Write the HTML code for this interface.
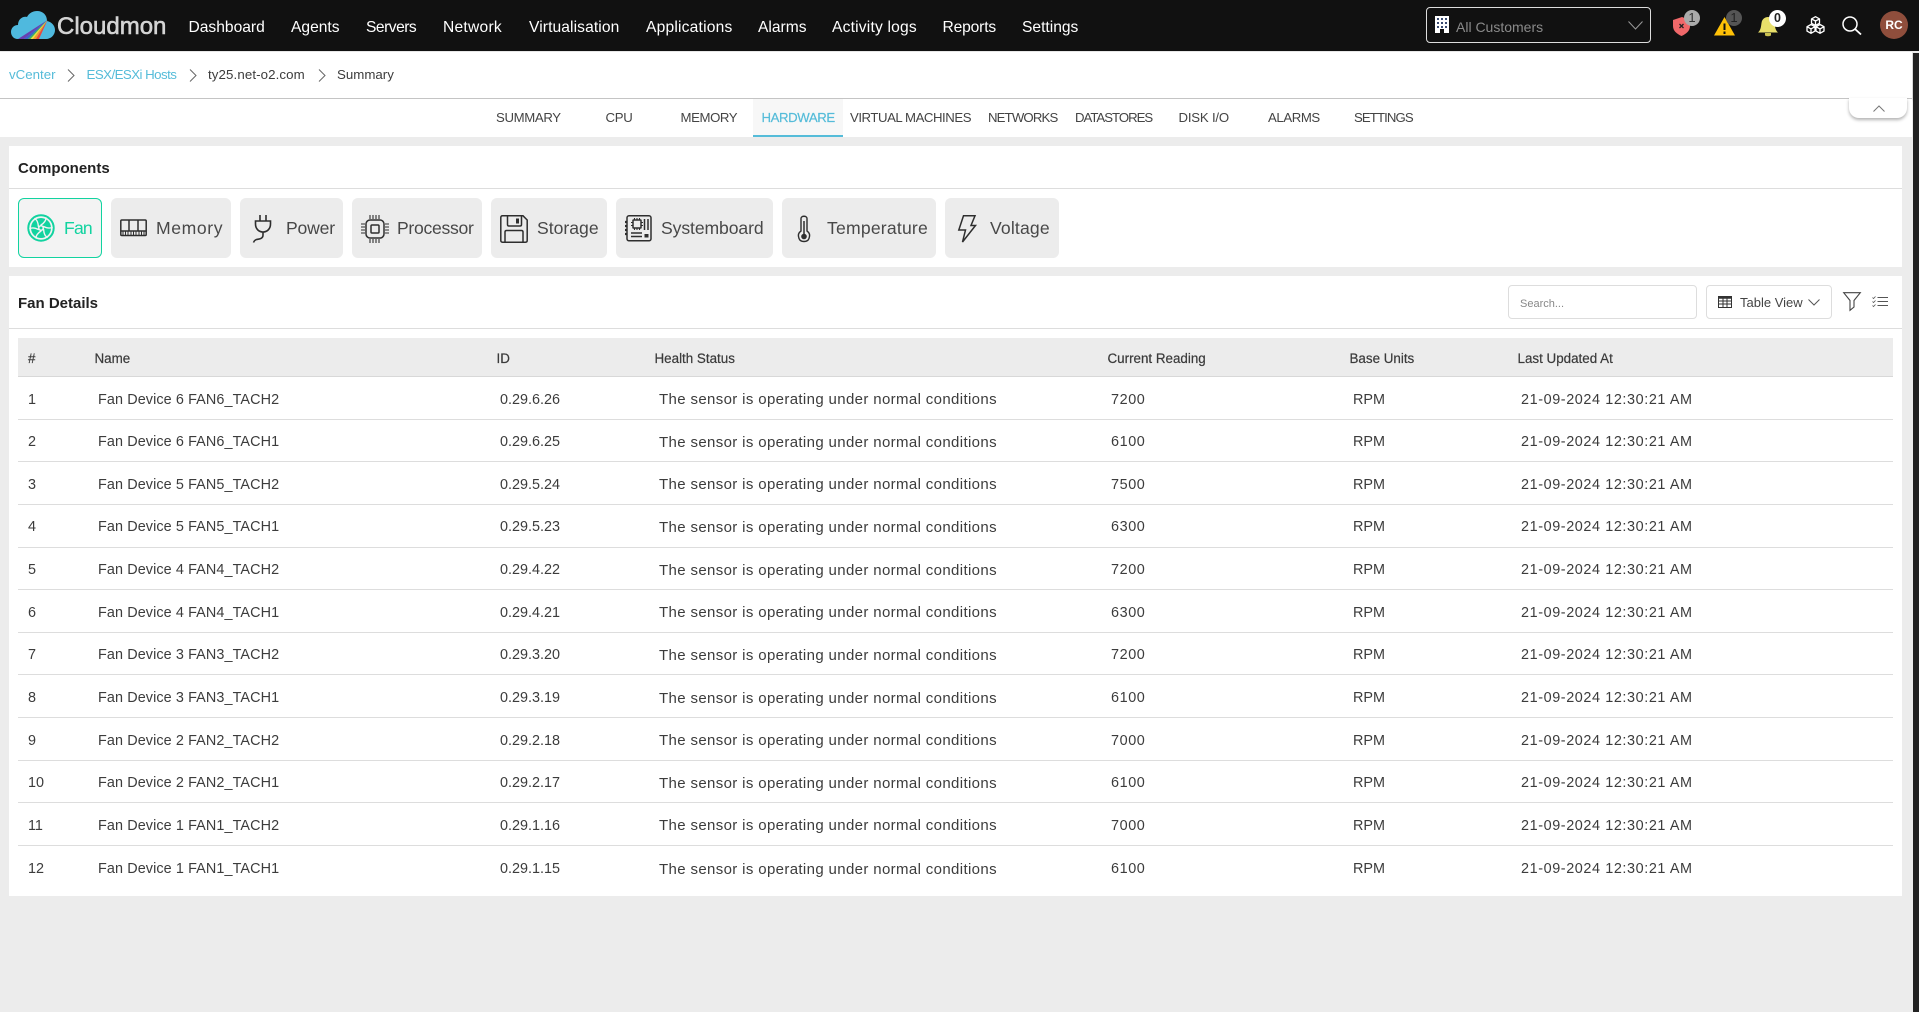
<!DOCTYPE html>
<html lang="en"><head><meta charset="utf-8"><title>Cloudmon</title>
<style>
*{box-sizing:border-box}
html,body{margin:0;padding:0;width:1919px;height:1012px;overflow:hidden;background:#ececec;font-family:"Liberation Sans",sans-serif;color:#3c3c3c}
.a{position:absolute;white-space:nowrap}
#top{position:absolute;left:0;top:0;width:1919px;height:51px;background:#111}
#top .n{position:absolute;top:0;line-height:55px;font-size:15.6px;color:#fff;white-space:nowrap}
#crumb{position:absolute;left:0;top:52px;width:1912px;height:47px;background:#fff;border-bottom:1px solid #c4c4c4;box-shadow:0 1px 2px rgba(0,0,0,.25)}
.c{position:absolute;top:75px;line-height:0;font-size:13.3px;white-space:nowrap;color:#3c3c3c}
#tabs{position:absolute;left:0;top:99px;width:1912px;height:38px;background:#fff}
.t{position:absolute;top:118px;line-height:0;font-size:13.2px;color:#444;white-space:nowrap}
.p{position:absolute;left:9px;width:1893px;background:#fff}
.h{position:absolute;left:18px;font-weight:700;font-size:15px;line-height:0;color:#222;white-space:nowrap}
.l{position:absolute;left:9px;width:1893px;height:1px;background:#ddd}
.b{position:absolute;top:198px;height:60px;background:#ececec;border-radius:6px}
.bt{position:absolute;top:228px;line-height:0;font-size:17.6px;color:#484848;white-space:nowrap}
svg{position:absolute;overflow:visible}
#tbl{position:absolute;left:18px;top:338px;width:1875px}
.th,.r{display:flex;align-items:center;font-size:14.4px;width:1875px}
.th{height:39px;padding-top:2.5px;background:#ececec;border-bottom:1px solid #d8d8d8;font-size:13.4px;color:#3a3a3a;-webkit-text-stroke:.2px #3a3a3a}
.r{height:42.65px;border-bottom:1px solid #ddd;padding-top:3.5px}
.r:last-child{border-bottom:0}
.r span,.th span{display:block;white-space:nowrap}
.c1{width:77px;padding-left:10px}
.c2{width:402px}.c3{width:158px}.c4{width:453px}.c5{width:242px}.c6{width:168px}.c7{width:375px}
.r .c2,.r .c3,.r .c5,.r .c6,.r .c7{padding-left:3px}
.r .c4{padding-left:4px}
.r .c2{letter-spacing:.1px}.r .c4{font-size:15px;letter-spacing:.36px}.r .c5{letter-spacing:.6px}.r .c7{letter-spacing:.6px}
</style></head><body>

<div id="top">
<svg style="left:0;top:0" width="60" height="51" viewBox="0 0 60 51">
<path d="M18 39C13 39 11 35 11 32C11 28 14 25 18 25C18 19 23 16 27 17C29 13 33 11 37 11C43 11 47 15 47 21C52 22 55 26 55 30C55 35 51 39 46 39Z" fill="#4fb9de"/>
<path d="M47.500 20L18 39H24Z" fill="#6a3fb0"/><path d="M47.500 20L24 39H28Z" fill="#3d62c8"/><path d="M47.500 20L28 39H30.500Z" fill="#3fb35a"/><path d="M47.500 20L30.500 39H33Z" fill="#f4e23c"/><path d="M47.500 20L33 39H36Z" fill="#f49a2c"/><path d="M47.500 20L36 39H39Z" fill="#e9483c"/>
</svg>
<div class="a" style="left:57px;top:0;line-height:54px;font-size:24px;color:#d4d4d4;-webkit-text-stroke:.6px #d4d4d4">Cloudmon</div>
<div class="n" style="left:188.500px">Dashboard</div>
<div class="n" style="left:291px">Agents</div>
<div class="n" style="left:366px;letter-spacing:-.5px">Servers</div>
<div class="n" style="left:443px;letter-spacing:.25px">Network</div>
<div class="n" style="left:529px;letter-spacing:.1px">Virtualisation</div>
<div class="n" style="left:646px;letter-spacing:.2px">Applications</div>
<div class="n" style="left:758px">Alarms</div>
<div class="n" style="left:832px;letter-spacing:.2px">Activity logs</div>
<div class="n" style="left:942.500px;letter-spacing:-.15px">Reports</div>
<div class="n" style="left:1022px">Settings</div>

<div class="a" style="left:1426px;top:7px;width:225px;height:36px;border:1px solid #ddd;border-radius:4px"></div>
<svg style="left:1435px;top:16px" width="14" height="17" viewBox="0 0 14 17"><rect x="0" y="0" width="14" height="17" fill="#fff"/><g fill="#3a4a70"><rect x="2" y="2" width="2" height="2"/><rect x="6" y="2" width="2" height="2"/><rect x="10" y="2" width="2" height="2"/><rect x="2" y="6" width="2" height="2"/><rect x="6" y="6" width="2" height="2"/><rect x="10" y="6" width="2" height="2"/><rect x="2" y="10" width="2" height="2"/><rect x="6" y="10" width="2" height="2"/><rect x="10" y="10" width="2" height="2"/></g><rect x="5" y="13" width="4" height="4" fill="#111"/></svg>
<div class="a" style="left:1456px;top:0;line-height:54px;font-size:14px;color:#8a8a8a">All Customers</div>
<svg style="left:1628px;top:21px" width="15" height="9" viewBox="0 0 15 9"><path d="M.5.500L7.500 8L14.500.500" fill="none" stroke="#999" stroke-width="1"/></svg>

<svg style="left:1673px;top:17px" width="18" height="19" viewBox="0 0 18 19"><path d="M0 3L9 0L17 3V9C17 14 13 17 8.500 19C4 17 0 14 0 9Z" fill="#f0686a"/><path d="M6 6L10 10M10 6L6 10" transform="translate(.5 1)" stroke="#222" stroke-width="1.300"/></svg>
<div class="a" style="left:1684px;top:10px;width:16px;height:16px;border-radius:50%;background:#aaa;color:#333;font-size:13px;line-height:16px;text-align:center">1</div>
<svg style="left:1714px;top:17px" width="21" height="19" viewBox="0 0 21 19"><path d="M10.500 0L21 18.500H0Z" fill="#ffc107"/><path d="M10.500 6.500V13M10.500 14.500V17" stroke="#111" stroke-width="2"/></svg>
<div class="a" style="left:1726px;top:10px;width:16px;height:16px;border-radius:50%;background:#555;color:#222;font-size:13px;line-height:16px;text-align:center">1</div>
<svg style="left:1758px;top:16px" width="20" height="21" viewBox="0 0 20 21"><path d="M0 16.500C3 14 3 10 3.500 7C4 3 7 1 10 1C13 1 16 3 16.500 7C17 10 17 14 20 16.500Z" fill="#e8df6a"/><path d="M7 17H13V19.500Q10 21 7 19.500Z" fill="#c9c050"/></svg>
<div class="a" style="left:1769px;top:9.500px;width:17px;height:17px;border-radius:50%;background:#fff;color:#222;font-size:12.500px;font-weight:700;line-height:17px;text-align:center">0</div>
<svg style="left:1806px;top:16px" width="19" height="18" viewBox="0 0 19 18" fill="none" stroke="#fff" stroke-width="1.300" stroke-linejoin="round"><path d="M9.500.700L13.500 2.900V7.300L9.500 9.500L5.500 7.300V2.900ZM5.500 2.900L9.500 5L13.500 2.900M9.500 5V9.500"/><path d="M5 8.500L9 10.700V15.100L5 17.300L1 15.100V10.700ZM1 10.700L5 12.900L9 10.700M5 12.900V17.300"/><path d="M14 8.500L18 10.700V15.100L14 17.300L10 15.100V10.700ZM10 10.700L14 12.900L18 10.700M14 12.900V17.300"/></svg>
<svg style="left:1842px;top:16px" width="20" height="19" viewBox="0 0 20 19" fill="none" stroke="#fff" stroke-width="1.500"><circle cx="8" cy="8" r="7"/><path d="M13 13L19 18.500" stroke-width="1.800"/></svg>
<div class="a" style="left:1880px;top:11px;width:28px;height:28px;border-radius:50%;background:#8f4e3c;color:#fff;font-size:12px;font-weight:700;line-height:28px;text-align:center">RC</div>
</div>

<div class="a" style="left:1913px;top:53px;width:6px;height:959px;background:#222"></div>

<div id="crumb"></div>
<div class="c" style="left:9px;color:#55bcd9">vCenter</div>
<svg style="left:67px;top:69px" width="8" height="13" viewBox="0 0 8 13"><path d="M1 .500L7 6.500L1 12.500" fill="none" stroke="#666"/></svg>
<div class="c" style="left:86.500px;color:#55bcd9;letter-spacing:-.55px">ESX/ESXi Hosts</div>
<svg style="left:189px;top:69px" width="8" height="13" viewBox="0 0 8 13"><path d="M1 .500L7 6.500L1 12.500" fill="none" stroke="#666"/></svg>
<div class="c" style="left:208px;letter-spacing:.1px">ty25.net-o2.com</div>
<svg style="left:318px;top:69px" width="8" height="13" viewBox="0 0 8 13"><path d="M1 .500L7 6.500L1 12.500" fill="none" stroke="#666"/></svg>
<div class="c" style="left:337px">Summary</div>

<div id="tabs"></div>
<div class="a" style="left:753px;top:99px;width:90px;height:38px;background:#f7f7f7;border-bottom:2px solid #55bcd9"></div>
<div class="t" style="left:496px;letter-spacing:-.35px">SUMMARY</div>
<div class="t" style="left:605.500px;letter-spacing:-.3px">CPU</div>
<div class="t" style="left:680.500px;letter-spacing:-.4px">MEMORY</div>
<div class="t" style="left:761.500px;color:#55bcd9;-webkit-text-stroke:.2px #55bcd9;letter-spacing:-.4px">HARDWARE</div>
<div class="t" style="left:850px;letter-spacing:-.45px">VIRTUAL MACHINES</div>
<div class="t" style="left:988px;letter-spacing:-.85px">NETWORKS</div>
<div class="t" style="left:1075px;letter-spacing:-1px">DATASTORES</div>
<div class="t" style="left:1178.500px;letter-spacing:-.2px">DISK I/O</div>
<div class="t" style="left:1268px;letter-spacing:-.4px">ALARMS</div>
<div class="t" style="left:1354px;letter-spacing:-.9px">SETTINGS</div>

<div class="a" style="left:1849px;top:98px;width:58px;height:20px;background:#fff;border-radius:0 0 10px 10px;box-shadow:0 2px 3px rgba(0,0,0,.3)"></div>
<svg style="left:1873px;top:105px" width="12" height="7" viewBox="0 0 12 7"><path d="M.5 6.500L6 1L11.500 6.500" fill="none" stroke="#777"/></svg>

<div class="p" style="top:146px;height:121px"></div>
<div class="l" style="top:188px"></div>
<div class="h" style="top:169px">Components</div>

<div class="b" style="left:18px;width:84px;background:#f3f3f3;border:1px solid #12d3a0"></div>
<svg style="left:27px;top:214px" width="28" height="28" viewBox="-14 -14 28 28">
<circle r="12.700" fill="none" stroke="#12d3a0" stroke-width="2"/>
<circle r="10" fill="#12d3a0"/>
<g fill="none" stroke="#f3f3f3" stroke-width="1.400" stroke-linecap="round">
<path d="M0-3C3-5 5-7 5-10"/><path d="M0-3C3-5 5-7 5-10" transform="rotate(60)"/><path d="M0-3C3-5 5-7 5-10" transform="rotate(120)"/><path d="M0-3C3-5 5-7 5-10" transform="rotate(180)"/><path d="M0-3C3-5 5-7 5-10" transform="rotate(240)"/><path d="M0-3C3-5 5-7 5-10" transform="rotate(300)"/>
</g>
<circle r="3" fill="#f3f3f3"/><circle r="1.500" fill="#12d3a0"/></svg>
<div class="bt" style="left:64px;color:#12d3a0;letter-spacing:-.8px">Fan</div>

<div class="b" style="left:111px;width:120px"></div>
<svg style="left:120px;top:219px" width="27" height="19" viewBox="0 0 27 19" fill="none" stroke="#2e2e2e" stroke-width="1.500"><rect x=".8" y="1" width="25.400" height="15.500" rx="1"/><path d="M9 1V12M18 1V12M1 12H26"/><path d="M3 12V16M5.500 12V16M8 12V16M11 12V16M13.500 12V16M16 12V16M19 12V16M21.500 12V16M24 12V16" stroke-width="1"/></svg>
<div class="bt" style="left:156px;letter-spacing:.6px">Memory</div>

<div class="b" style="left:240px;width:103px"></div>
<svg style="left:253px;top:214px" width="19" height="29" viewBox="0 0 19 29" fill="none" stroke="#2e2e2e" stroke-width="1.600"><path d="M7 1V7M13 1V7M2.500 7H17.500V10C17.500 15 14 18 10 18C6 18 2.500 15 2.500 10ZM10 18V21C10 25 6 25 3.500 25.500C2 26 1 27 .5 28.500"/></svg>
<div class="bt" style="left:286px;letter-spacing:-.2px">Power</div>

<div class="b" style="left:352px;width:130px"></div>
<svg style="left:361px;top:215px" width="28" height="28" viewBox="0 0 28 28" fill="none" stroke="#2e2e2e" stroke-width="1.500"><rect x="5" y="5" width="18" height="18" rx="4"/><rect x="10" y="10" width="8" height="8" rx="1"/><path d="M9 0V4M12 0V4M15 0V4M18 0V4M9 24V28M12 24V28M15 24V28M18 24V28M0 9H4M0 12H4M0 15H4M0 18H4M24 9H28M24 12H28M24 15H28M24 18H28" stroke-width="1.100"/></svg>
<div class="bt" style="left:397px;letter-spacing:-.3px">Processor</div>

<div class="b" style="left:491px;width:116px"></div>
<svg style="left:500px;top:215px" width="28" height="28" viewBox="0 0 28 28" fill="none" stroke="#2e2e2e" stroke-width="1.500"><path d="M2.500.8H23L27.200 5V25.500Q27.200 27.200 25.500 27.200H2.500Q.8 27.200.8 25.500V2.500Q.8.8 2.500.8Z"/><path d="M7.500 1V9.500Q7.500 11 9 11H20Q21.500 11 21.500 9.500V1M5 27V17Q5 15.500 6.500 15.500H21.500Q23 15.500 23 17V27"/><rect x="16" y="3.500" width="3" height="5" fill="#2e2e2e" stroke="none"/></svg>
<div class="bt" style="left:537px">Storage</div>

<div class="b" style="left:616px;width:157px"></div>
<svg style="left:625px;top:215px" width="27" height="27" viewBox="0 0 27 27" fill="none" stroke="#2e2e2e" stroke-width="1.500"><rect x="2" y=".8" width="24" height="25" rx="2"/><rect x="8" y="5" width="8" height="8" rx=".5"/><path d="M9.500 3V5M12 3V5M14.500 3V5M9.500 13V15M12 13V15M14.500 13V15M6 7.500H8M6 10.500H8M16 7.500H18M16 10.500H18" stroke-width="1.100"/><path d="M19.500 4V15M23 4V15M6 18H17M6 21.500H17" stroke-width="1.500"/><rect x="19.500" y="19" width="4" height="3.500" fill="#2e2e2e" stroke="none"/><path d="M0 7H2M0 11H2M0 15H2M0 19H2" stroke-width="2.200"/></svg>
<div class="bt" style="left:661px;letter-spacing:-.1px">Systemboard</div>

<div class="b" style="left:782px;width:154px"></div>
<svg style="left:798px;top:215px" width="12" height="28" viewBox="0 0 12 28" fill="none" stroke="#2e2e2e" stroke-width="1.400"><path d="M3 16V3.500C3 .5 9 .5 9 3.500V16C12 18 12 21 11 23.500C9.500 27.500 2.500 27.500 1 23.500C0 21 0 18 3 16Z"/><path d="M6 6V20" stroke-width="1.500"/><circle cx="6" cy="21.500" r="2.800" fill="#2e2e2e" stroke="none"/></svg>
<div class="bt" style="left:827px;letter-spacing:.2px">Temperature</div>

<div class="b" style="left:945px;width:114px"></div>
<svg style="left:958px;top:215px" width="18" height="28" viewBox="0 0 18 28" fill="none" stroke="#2e2e2e" stroke-width="1.500" stroke-linejoin="miter"><path d="M5.500.8H17L13 10.500H17.500L4.500 27L7.500 15H.8Z"/></svg>
<div class="bt" style="left:990px;letter-spacing:.15px">Voltage</div>

<div class="p" style="top:276px;height:620px"></div>
<div class="l" style="top:328px"></div>
<div class="h" style="top:304px">Fan Details</div>

<div class="a" style="left:1508px;top:285px;width:189px;height:34px;border:1px solid #ddd;border-radius:4px;background:#fff"></div>
<div class="a" style="left:1520px;top:0;line-height:609px;font-size:11px;color:#888">Search...</div>
<div class="a" style="left:1706px;top:285px;width:126px;height:34px;border:1px solid #ddd;border-radius:4px;background:#fff"></div>
<svg style="left:1718px;top:296px" width="14" height="12" viewBox="0 0 14 12" fill="none" stroke="#333"><rect x=".5" y=".5" width="13" height="11"/><path d="M0 1.500H14" stroke-width="2.500"/><path d="M.5 5H13.500M.5 8H13.500M5 2V11.500M9 2V11.500"/></svg>
<div class="a" style="left:1740px;top:0;line-height:605px;font-size:13px;color:#444">Table View</div>
<svg style="left:1808px;top:299px" width="12" height="7" viewBox="0 0 12 7"><path d="M.5.500L6 6L11.500.500" fill="none" stroke="#555"/></svg>
<svg style="left:1843px;top:292px" width="18" height="19" viewBox="0 0 18 19"><path d="M.7.700H17.300L11 8.500V15L7 18.300V8.500Z" fill="none" stroke="#444" stroke-width="1.100"/></svg>
<svg style="left:1872px;top:296px" width="16" height="11" viewBox="0 0 16 11" fill="none" stroke="#555"><path d="M5.500 1.500H16M5.500 5.500H16M5.500 9.500H16"/><path d="M.5 1.500L1.500 2.500L3.500.5M.5 5.500L1.500 6.500L3.500 4.500M.5 9.500L1.500 10.500L3.500 8.500" stroke-width=".8"/></svg>

<div id="tbl">
<div class="th"><span class="c1">#</span><span class="c2" style="margin-left:-.5px">Name</span><span class="c3">ID</span><span class="c4">Health Status</span><span class="c5">Current Reading</span><span class="c6">Base Units</span><span class="c7">Last Updated At</span></div>
<div class="r"><span class="c1">1</span><span class="c2">Fan Device 6 FAN6_TACH2</span><span class="c3">0.29.6.26</span><span class="c4">The sensor is operating under normal conditions</span><span class="c5">7200</span><span class="c6">RPM</span><span class="c7">21-09-2024 12:30:21 AM</span></div>
<div class="r"><span class="c1">2</span><span class="c2">Fan Device 6 FAN6_TACH1</span><span class="c3">0.29.6.25</span><span class="c4">The sensor is operating under normal conditions</span><span class="c5">6100</span><span class="c6">RPM</span><span class="c7">21-09-2024 12:30:21 AM</span></div>
<div class="r"><span class="c1">3</span><span class="c2">Fan Device 5 FAN5_TACH2</span><span class="c3">0.29.5.24</span><span class="c4">The sensor is operating under normal conditions</span><span class="c5">7500</span><span class="c6">RPM</span><span class="c7">21-09-2024 12:30:21 AM</span></div>
<div class="r"><span class="c1">4</span><span class="c2">Fan Device 5 FAN5_TACH1</span><span class="c3">0.29.5.23</span><span class="c4">The sensor is operating under normal conditions</span><span class="c5">6300</span><span class="c6">RPM</span><span class="c7">21-09-2024 12:30:21 AM</span></div>
<div class="r"><span class="c1">5</span><span class="c2">Fan Device 4 FAN4_TACH2</span><span class="c3">0.29.4.22</span><span class="c4">The sensor is operating under normal conditions</span><span class="c5">7200</span><span class="c6">RPM</span><span class="c7">21-09-2024 12:30:21 AM</span></div>
<div class="r"><span class="c1">6</span><span class="c2">Fan Device 4 FAN4_TACH1</span><span class="c3">0.29.4.21</span><span class="c4">The sensor is operating under normal conditions</span><span class="c5">6300</span><span class="c6">RPM</span><span class="c7">21-09-2024 12:30:21 AM</span></div>
<div class="r"><span class="c1">7</span><span class="c2">Fan Device 3 FAN3_TACH2</span><span class="c3">0.29.3.20</span><span class="c4">The sensor is operating under normal conditions</span><span class="c5">7200</span><span class="c6">RPM</span><span class="c7">21-09-2024 12:30:21 AM</span></div>
<div class="r"><span class="c1">8</span><span class="c2">Fan Device 3 FAN3_TACH1</span><span class="c3">0.29.3.19</span><span class="c4">The sensor is operating under normal conditions</span><span class="c5">6100</span><span class="c6">RPM</span><span class="c7">21-09-2024 12:30:21 AM</span></div>
<div class="r"><span class="c1">9</span><span class="c2">Fan Device 2 FAN2_TACH2</span><span class="c3">0.29.2.18</span><span class="c4">The sensor is operating under normal conditions</span><span class="c5">7000</span><span class="c6">RPM</span><span class="c7">21-09-2024 12:30:21 AM</span></div>
<div class="r"><span class="c1">10</span><span class="c2">Fan Device 2 FAN2_TACH1</span><span class="c3">0.29.2.17</span><span class="c4">The sensor is operating under normal conditions</span><span class="c5">6100</span><span class="c6">RPM</span><span class="c7">21-09-2024 12:30:21 AM</span></div>
<div class="r"><span class="c1">11</span><span class="c2">Fan Device 1 FAN1_TACH2</span><span class="c3">0.29.1.16</span><span class="c4">The sensor is operating under normal conditions</span><span class="c5">7000</span><span class="c6">RPM</span><span class="c7">21-09-2024 12:30:21 AM</span></div>
<div class="r"><span class="c1">12</span><span class="c2">Fan Device 1 FAN1_TACH1</span><span class="c3">0.29.1.15</span><span class="c4">The sensor is operating under normal conditions</span><span class="c5">6100</span><span class="c6">RPM</span><span class="c7">21-09-2024 12:30:21 AM</span></div>
</div>
</body></html>
